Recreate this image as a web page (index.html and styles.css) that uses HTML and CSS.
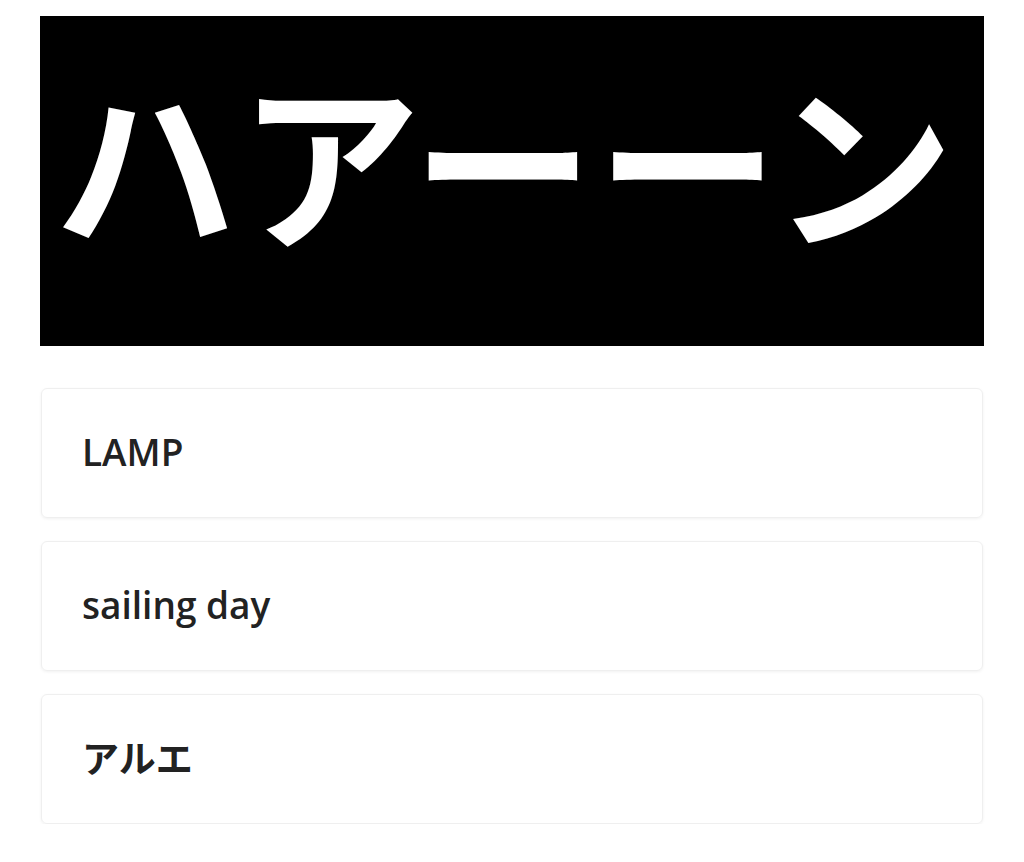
FILE: index.html
```html
<!DOCTYPE html>
<html lang="ja">
    <head>
        <meta charset="UTF-8">
        <meta name="viewport" content="width=device-width, initial-scale=1.0">
        <title>ハアーーン</title>
        <link rel="stylesheet" href="styles.css">
    </head>
    <body>
        <div id="page">
            <div class="banner">ハアーーン</div>
            <div class="choices">
                <div class="choice">LAMP</div>
                <div class="choice">sailing day</div>
                <div class="choice">アルエ</div>
            </div>
        </div>
    </body>
</html>
```

FILE: styles.css
```css
body {
    margin: 0;
    padding: 0;
    background-color: #ffffff;
    font-family: "Open Sans", "Noto Sans CJK JP", sans-serif;
    color: #222;
}
#page {
    padding: 16px 40px 0 40px;
}
.banner {
    background-color: #000;
    color: #fff;
    height: 330px;
    display: flex;
    align-items: center;
    font-family: "Noto Sans CJK JP", sans-serif;
    font-size: 182px;
    font-weight: 700;
    line-height: 1;
    letter-spacing: 2.5px;
    padding: 0 0 48px 14px;
    box-sizing: border-box;
    white-space: nowrap;
    overflow: hidden;
}
.choices {
    display: flex;
    flex-direction: column;
    gap: 23px;
    margin-top: 42px;
    padding: 0 1px;
}
.choice {
    height: 130px;
    box-sizing: border-box;
    border: 1px solid #efefef;
    border-radius: 6px;
    box-shadow: 0 1px 3px rgba(0, 0, 0, 0.06);
    display: flex;
    align-items: center;
    padding: 0 0 4px 40px;
    font-size: 37px;
    font-weight: 600;
    color: #222;
}
```
